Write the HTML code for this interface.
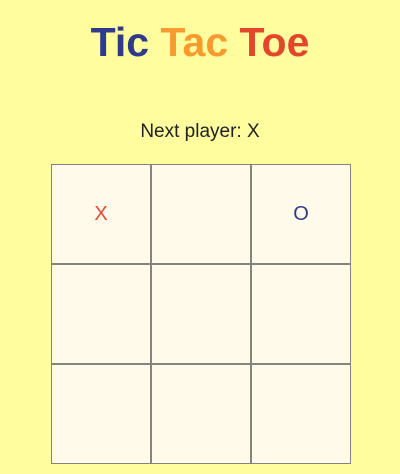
<!DOCTYPE html>
<html><head><style>
html,body{margin:0;padding:0;}
body{width:400px;height:474px;background:#fffd9d;font-family:"Liberation Sans",sans-serif;position:relative;overflow:hidden;}
h1{position:absolute;top:18px;left:0;width:400px;margin:0;text-align:center;font-size:41px;font-weight:bold;line-height:48px;}
.b{color:#2f3a8d}.o{color:#f89a2e}.r{color:#e3462a}
.next{position:absolute;top:120px;left:0;width:400px;text-align:center;font-size:19px;color:#222;line-height:24px;}
.board{position:absolute;left:51px;top:164px;width:300px;height:300px;display:grid;grid-template-columns:repeat(3,100px);grid-template-rows:repeat(3,100px);}
.c{box-sizing:border-box;border:1px solid #858580;background:#fffaea;display:flex;align-items:center;justify-content:center;font-size:20px;width:100px;height:100px;}
.x{color:#e04b3a}.oo{color:#2f3a8d}
</style></head><body>
<h1><span class="b">Tic</span> <span class="o">Tac</span> <span class="r">Toe</span></h1>
<div class="next">Next player: X</div>
<div class="board">
<div class="c x">X</div><div class="c"></div><div class="c oo">O</div>
<div class="c"></div><div class="c"></div><div class="c"></div>
<div class="c"></div><div class="c"></div><div class="c"></div>
</div>
</body></html>
